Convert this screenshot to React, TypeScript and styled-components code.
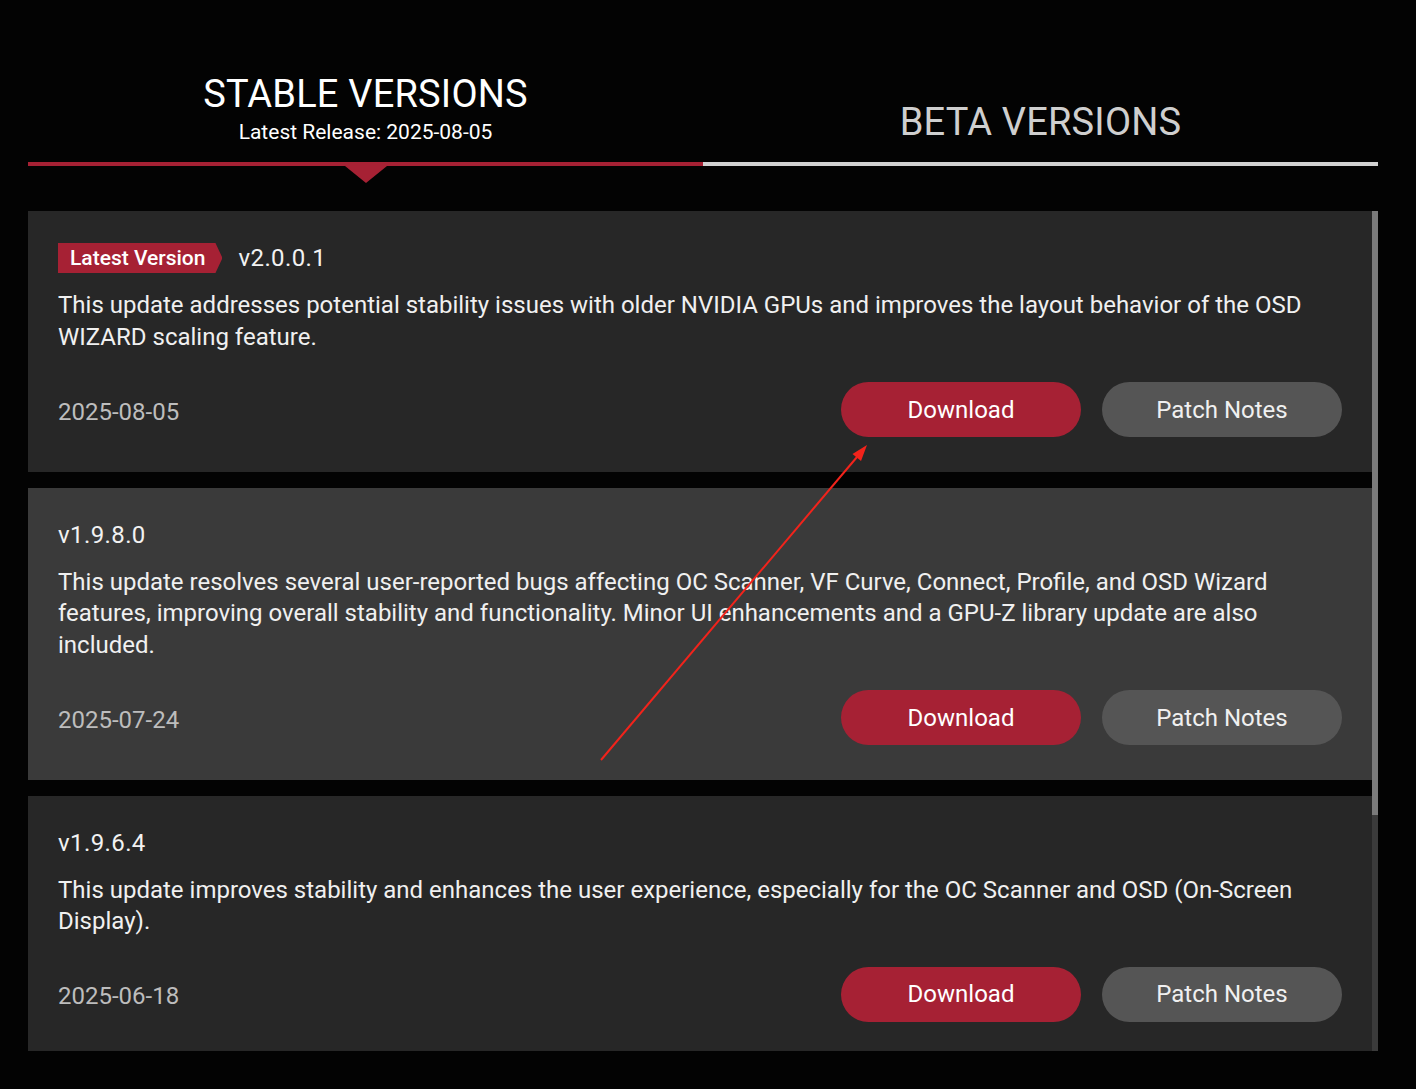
import React from "react";
import styled, { createGlobalStyle } from "styled-components";

const GlobalStyle = createGlobalStyle`
  html, body {
    margin: 0;
    padding: 0;
    background: #030303;
    font-family: Roboto, "Noto Sans", "Liberation Sans", sans-serif;
    color: #f0f0f0;
  }
  * { box-sizing: border-box; }
`;

const accent = "#a62134";

const Page = styled.div`
  position: relative;
  width: 1416px;
  height: 1089px;
  padding: 71px 38px 0 28px;
  overflow: hidden;
`;

const TabBar = styled.div`
  display: grid;
  grid-template-columns: 1fr 1fr;
`;

const Tab = styled.div<{ $active?: boolean }>`
  position: relative;
  display: flex;
  flex-direction: column;
  align-items: center;
  justify-content: flex-end;
  padding-bottom: 17px;
  border-bottom: 4px solid ${({ $active }) => ($active ? accent : "#d2d2d2")};
  color: ${({ $active }) => ($active ? "#ffffff" : "#cfcfcf")};
  cursor: pointer;

  ${({ $active }) =>
    $active &&
    `
    &::after {
      content: "";
      position: absolute;
      left: 50%;
      bottom: -21px;
      transform: translateX(-50%);
      border-left: 21px solid transparent;
      border-right: 21px solid transparent;
      border-top: 17px solid ${accent};
    }
  `}
`;

const TabTitle = styled.div`
  font-size: 38px;
  line-height: 46px;
  letter-spacing: 0.2px;
`;

const TabSubtitle = styled.div`
  margin-top: 3px;
  font-size: 21px;
  line-height: 25px;
`;

const ListViewport = styled.div`
  display: flex;
  margin-top: 45px;
  height: 840px;
`;

const VersionList = styled.div`
  flex: 1;
  overflow: hidden;
  display: flex;
  flex-direction: column;
  gap: 16px;
`;

const ScrollTrack = styled.div`
  flex: 0 0 6px;
  background: #3b3b3b;
`;

const ScrollThumb = styled.div`
  width: 100%;
  background: #7b7b7b;
`;

const Card = styled.div<{ $alt?: boolean }>`
  flex: 0 0 auto;
  background: ${({ $alt }) => ($alt ? "#3a3a3a" : "#272727")};
  padding: 32px 30px 34.5px;
`;

const CardHeader = styled.div`
  display: flex;
  align-items: center;
  gap: 16px;
  min-height: 30px;
`;

const Badge = styled.span`
  display: inline-flex;
  align-items: center;
  height: 30px;
  padding: 0 17px 0 12px;
  background: ${accent};
  color: #ffffff;
  font-size: 21px;
  font-weight: 500;
  clip-path: polygon(0 0, calc(100% - 7px) 0, 100% 50%, calc(100% - 7px) 100%, 0 100%);
`;

const VersionName = styled.span`
  font-size: 24px;
  line-height: 30px;
  letter-spacing: 0.4px;
  color: #f2f2f2;
`;

const Description = styled.p`
  margin: 17px 0 0;
  font-size: 24px;
  line-height: 31.5px;
  color: #f0f0f0;
`;

const CardFooter = styled.div`
  display: flex;
  align-items: center;
  justify-content: space-between;
  margin-top: 29px;
`;

const ReleaseDate = styled.span`
  padding-top: 4px;
  font-size: 24px;
  color: #bdbdbd;
`;

const Actions = styled.div`
  display: flex;
  gap: 21px;
`;

const PillButton = styled.button<{ $primary?: boolean }>`
  width: 240px;
  height: 55px;
  border: none;
  border-radius: 28px;
  background: ${({ $primary }) => ($primary ? accent : "#555555")};
  color: ${({ $primary }) => ($primary ? "#ffffff" : "#f0f0f0")};
  font-family: inherit;
  font-size: 24px;
  cursor: pointer;
`;

const Annotation = styled.svg`
  position: absolute;
  left: 0;
  top: 0;
  pointer-events: none;
`;

interface IRelease {
  version: string;
  date: string;
  text: string;
  latest?: boolean;
}

const releases: IRelease[] = [
  {
    version: "v2.0.0.1",
    date: "2025-08-05",
    latest: true,
    text: "This update addresses potential stability issues with older NVIDIA GPUs and improves the layout behavior of the OSD WIZARD scaling feature.",
  },
  {
    version: "v1.9.8.0",
    date: "2025-07-24",
    text: "This update resolves several user-reported bugs affecting OC Scanner, VF Curve, Connect, Profile, and OSD Wizard features, improving overall stability and functionality. Minor UI enhancements and a GPU-Z library update are also included.",
  },
  {
    version: "v1.9.6.4",
    date: "2025-06-18",
    text: "This update improves stability and enhances the user experience, especially for the OC Scanner and OSD (On-Screen Display).",
  },
];

// visible part of the list vs. its full scroll height
const viewportHeight = 840;
const contentHeight = 1168;

const App = () => {
  const thumbHeight = Math.round((viewportHeight / contentHeight) * viewportHeight);

  return (
    <React.Fragment>
      <GlobalStyle />
      <Page>
        <TabBar>
          <Tab $active>
            <TabTitle>STABLE VERSIONS</TabTitle>
            <TabSubtitle>Latest Release: 2025-08-05</TabSubtitle>
          </Tab>
          <Tab>
            <TabTitle>BETA VERSIONS</TabTitle>
          </Tab>
        </TabBar>

        <ListViewport>
          <VersionList>
            {releases.map((r, i) => (
              <Card key={r.version} $alt={i % 2 === 1}>
                <CardHeader>
                  {r.latest && <Badge>Latest Version</Badge>}
                  <VersionName>{r.version}</VersionName>
                </CardHeader>
                <Description>{r.text}</Description>
                <CardFooter>
                  <ReleaseDate>{r.date}</ReleaseDate>
                  <Actions>
                    <PillButton $primary>Download</PillButton>
                    <PillButton>Patch Notes</PillButton>
                  </Actions>
                </CardFooter>
              </Card>
            ))}
          </VersionList>
          <ScrollTrack>
            <ScrollThumb style={{ height: thumbHeight }} />
          </ScrollTrack>
        </ListViewport>

        <Annotation width="1416" height="1089" viewBox="0 0 1416 1089">
          <line x1="601" y1="760" x2="857" y2="457" stroke="#f2231b" strokeWidth="2" />
          <polygon points="867,445 861,461 852.5,454" fill="#f2231b" />
        </Annotation>
      </Page>
    </React.Fragment>
  );
};

export default App;
